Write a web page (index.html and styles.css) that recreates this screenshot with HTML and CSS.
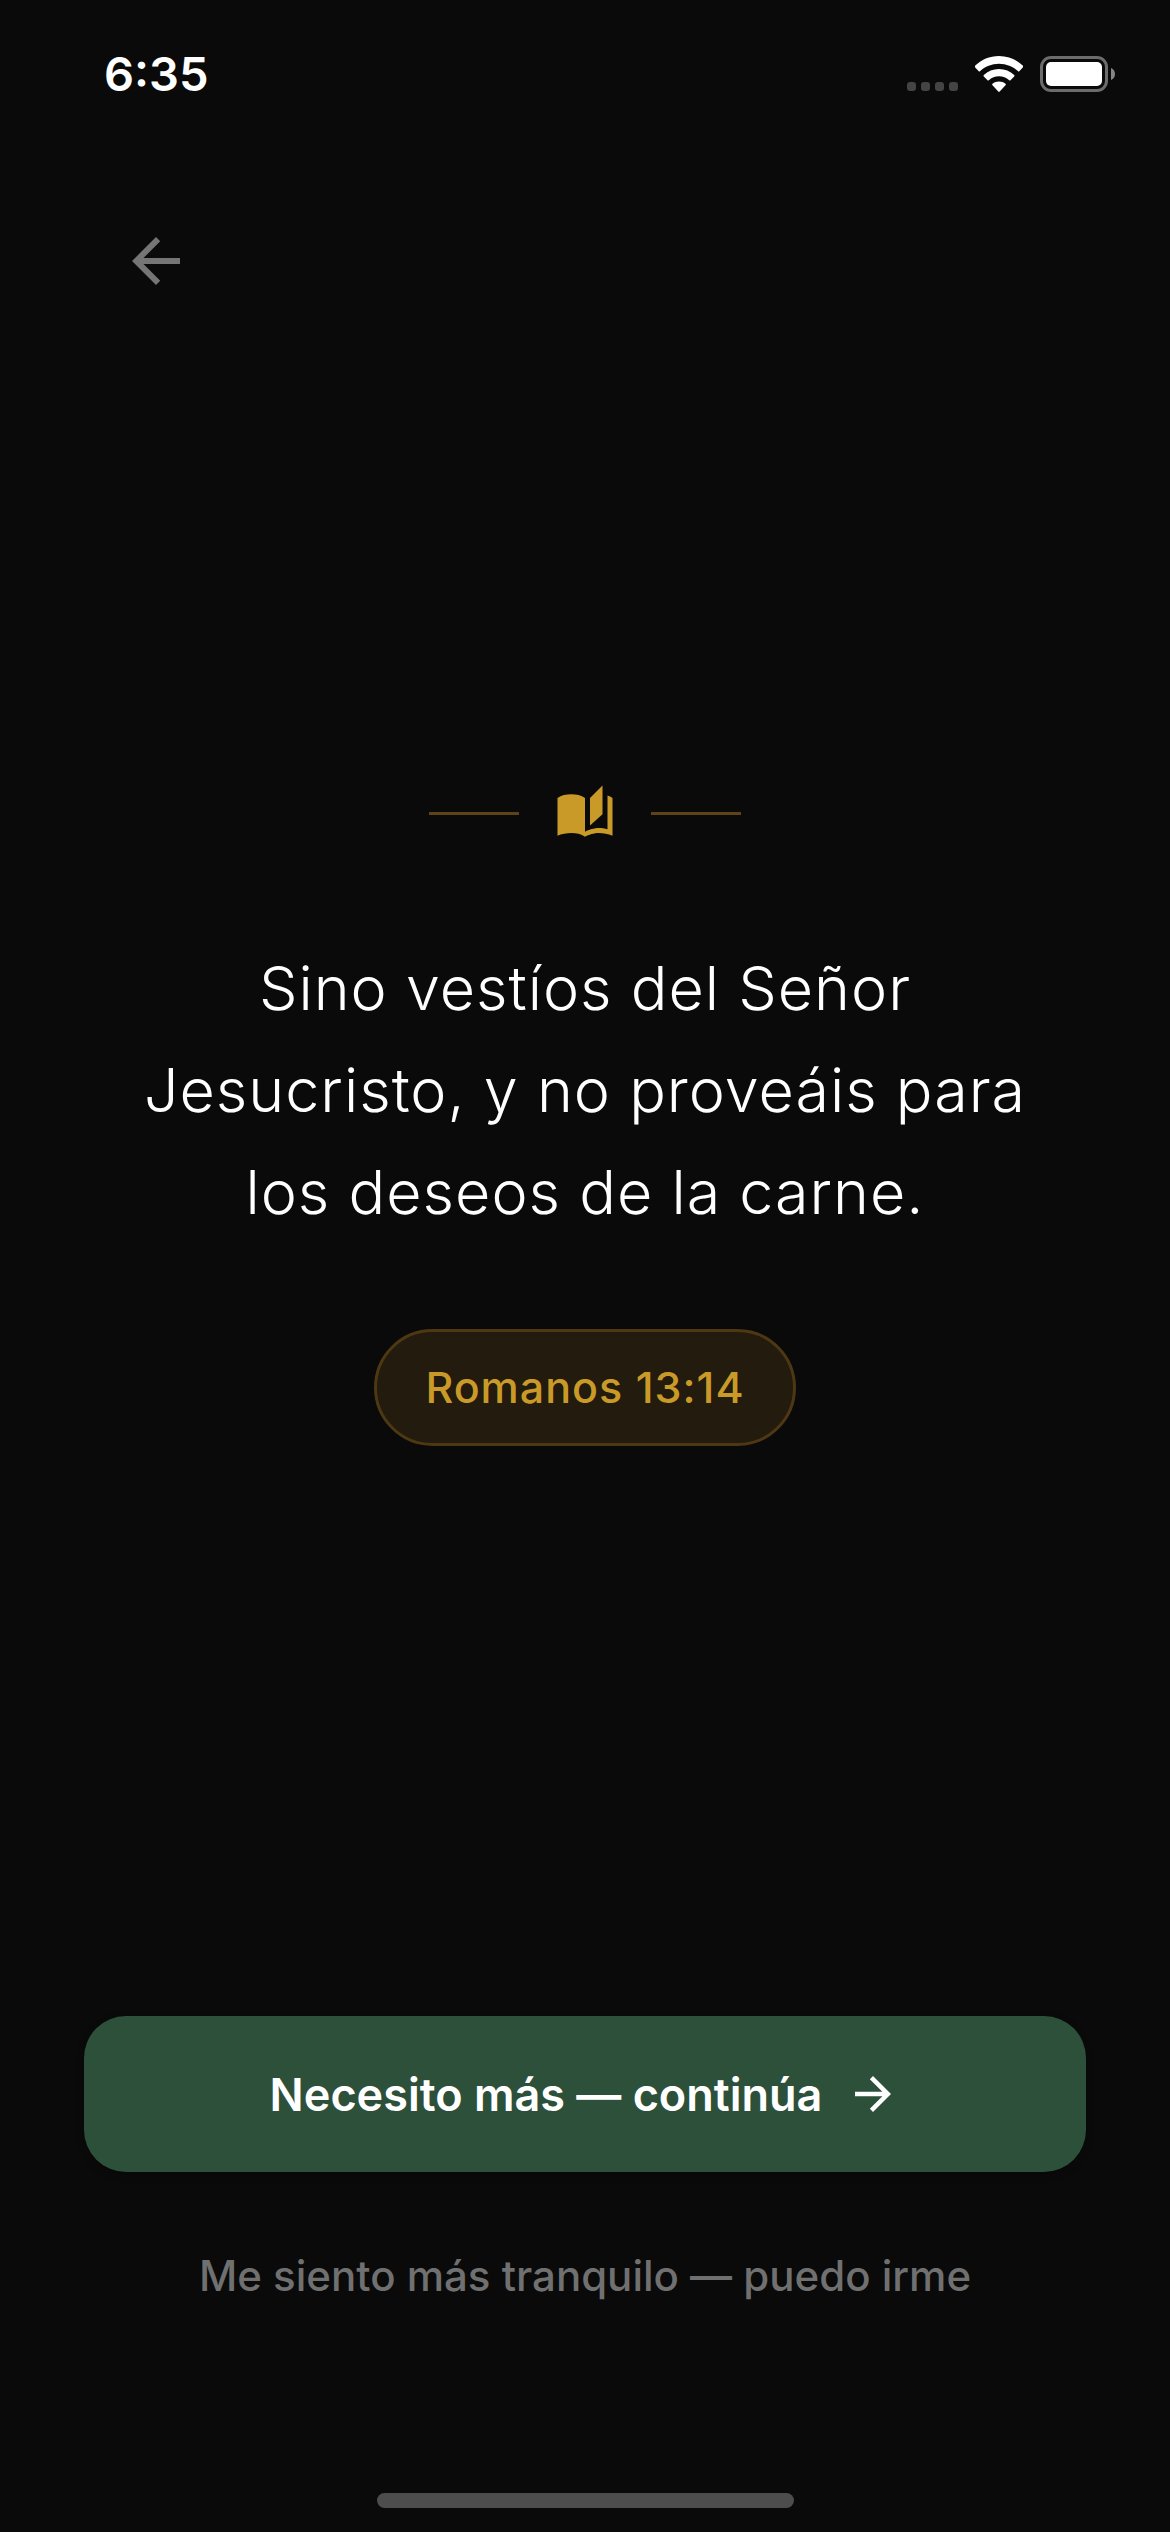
FILE: index.html
```html
<!DOCTYPE html>
<html lang="es">

<head>
    <meta charset="UTF-8">
    <meta name="viewport" content="width=device-width, initial-scale=1.0">
    <title>Romanos 13:14</title>
    <link rel="stylesheet" href="styles.css">
</head>

<body>
    <div class="screen">
        <div class="status-bar">
            <span class="clock">6:35</span>
            <div class="status-icons">
                <span class="signal"><i></i><i></i><i></i><i></i></span>
                <svg class="wifi" viewBox="0 0 48 36" aria-hidden="true">
                    <path d="M24 0C14.600 0 6.200 3.700 0 9.800c-.5.5-.5 1 0 1.500l3.700 3.900c.4.4.9.4 1.300 0C10 10.500 16.700 7.700 24 7.700s14 2.800 19 7.500c.4.400.9.400 1.300 0l3.700-3.900c.5-.5.5-1 0-1.500C41.800 3.700 33.400 0 24 0z" />
                    <path d="M24 13c-5.900 0-11.200 2.200-15.200 5.900-.5.5-.5 1 0 1.500l3.700 3.900c.4.4.9.4 1.300 0 2.800-2.500 6.300-4 10.200-4s7.400 1.500 10.200 4c.4.4.9.4 1.300 0l3.700-3.900c.5-.5.5-1 0-1.500C35.200 15.200 29.900 13 24 13z" />
                    <path d="M24 25.500c-2.500 0-4.700.9-6.500 2.300-.5.4-.5 1 0 1.500l5.800 6.200c.4.5 1 .5 1.400 0l5.800-6.200c.5-.5.5-1.100 0-1.500-1.800-1.400-4-2.300-6.500-2.300z" />
                </svg>
                <svg class="battery" viewBox="0 0 75 36" aria-hidden="true">
                    <rect class="battery-frame" x="1.500" y="1.500" width="65" height="33" rx="9.500" />
                    <rect x="6" y="6" width="56" height="24" rx="5" />
                    <path class="battery-cap" d="M71 12c2.500 1 4 3.200 4 6s-1.500 5-4 6z" />
                </svg>
            </div>
        </div>

        <header class="top-bar">
            <button class="back-btn" type="button" aria-label="Volver">
                <svg viewBox="0 0 24 24" aria-hidden="true">
                    <path d="M20 11H7.830l5.590-5.590L12 4l-8 8 8 8 1.410-1.410L7.830 13H20v-2z" />
                </svg>
            </button>
        </header>

        <main class="verse">
            <div class="ornament">
                <span class="line"></span>
                <svg viewBox="0 0 24 24" aria-hidden="true">
                    <path d="M19 1l-5 5v11l5-4.500V1z" />
                    <path d="M1 6v15.100C2.500 20.400 4.800 20 6.500 20c1.950 0 4.050.4 5.500 1.500 1.350-.85 3.800-1.500 5.500-1.500 1.650 0 3.900.3 5.500 1.100V6c-.6-.45-1.250-.75-2-1v13.500c-1.100-.35-2.300-.5-3.500-.5-1.700 0-4.150.65-5.500 1.500V6c-1.450-1.100-3.550-1.500-5.500-1.500S2.450 4.900 1 6z" />
                </svg>
                <span class="line"></span>
            </div>
            <p class="verse-text">Sino vestíos del Señor Jesucristo, y no proveáis para los deseos de la carne.</p>
            <span class="reference">Romanos 13:14</span>
        </main>

        <footer class="actions">
            <button class="continue-btn" type="button">
                Necesito más — continúa
                <svg viewBox="0 0 24 24" aria-hidden="true">
                    <path d="M12 4l-1.410 1.410L16.170 11H4v2h12.170l-5.580 5.590L12 20l8-8z" />
                </svg>
            </button>
            <button class="leave-btn" type="button">Me siento más tranquilo — puedo irme</button>
        </footer>

        <div class="home-indicator"></div>
    </div>
</body>

</html>
```
FILE: styles.css
```css
* {
    margin: 0;
    padding: 0;
    box-sizing: border-box;
}

body {
    background-color: #0a0a0a;
    color: #fff;
    font-family: 'Inter', 'Roboto', sans-serif;
    font-optical-sizing: none;
}

button {
    border: none;
    background: none;
    font-family: inherit;
    cursor: pointer;
}

svg {
    display: block;
    fill: currentColor;
}

.screen {
    display: flex;
    flex-direction: column;
    min-height: 100vh;
}

/* status bar */
.status-bar {
    display: flex;
    justify-content: space-between;
    align-items: center;
    height: 147px;
    padding: 0 55px 0 104px;
}

.clock {
    font-size: 47px;
    font-weight: 600;
}

.status-icons {
    display: flex;
    align-items: flex-end;
    gap: 17px;
}

.signal {
    display: flex;
    gap: 5px;
    padding-bottom: 1px;
}

.signal i {
    width: 9px;
    height: 9px;
    border-radius: 3px;
    background-color: #444;
}

.wifi {
    width: 48px;
    height: 36px;
}

.battery {
    width: 75px;
    height: 36px;
}

.battery-frame {
    fill: none;
    stroke: #6c6c6c;
    stroke-width: 3;
}

.battery-cap {
    fill: #858585;
}

/* back button */
.top-bar {
    padding: 42px 84px 0;
}

.back-btn {
    display: flex;
    justify-content: center;
    align-items: center;
    width: 144px;
    height: 144px;
    color: #757575;
}

.back-btn svg {
    width: 72px;
    height: 72px;
}

/* verse */
.verse {
    flex: 1;
    display: flex;
    flex-direction: column;
    justify-content: center;
    align-items: center;
    padding: 0 84px;
    text-align: center;
}

.ornament {
    display: flex;
    align-items: center;
    gap: 36px;
    margin-bottom: 94px;
    color: #c99a27;
}

.ornament svg {
    width: 60px;
    height: 60px;
}

.line {
    width: 90px;
    height: 3px;
    background-color: #5c4318;
}

.verse-text {
    margin-bottom: 86px;
    padding: 0 48px;
    font-size: 61px;
    font-weight: 300;
    line-height: 102px;
    letter-spacing: 1px;
}

.reference {
    padding: 30px 48px;
    border: 3px solid #4d3813;
    border-radius: 60px;
    background-color: #221b0e;
    color: #c99a27;
    font-size: 43px;
    font-weight: 500;
    line-height: 51px;
    letter-spacing: 1px;
}

/* actions */
.actions {
    display: flex;
    flex-direction: column;
    gap: 36px;
    padding: 120px 84px 151px;
}

.continue-btn {
    display: flex;
    justify-content: center;
    align-items: center;
    gap: 24px;
    height: 156px;
    border-radius: 42px;
    background-color: #2d503b;
    box-shadow: 0 3px 9px rgba(0, 0, 0, 0.2);
    color: #fff;
    font-size: 45px;
    font-weight: 600;
}

.continue-btn svg {
    width: 54px;
    height: 54px;
}

.leave-btn {
    height: 134px;
    color: #707070;
    font-size: 42px;
    font-weight: 500;
}

.home-indicator {
    align-self: center;
    width: 417px;
    height: 15px;
    margin-bottom: 24px;
    border-radius: 8px;
    background-color: #4d4d4d;
}
```
